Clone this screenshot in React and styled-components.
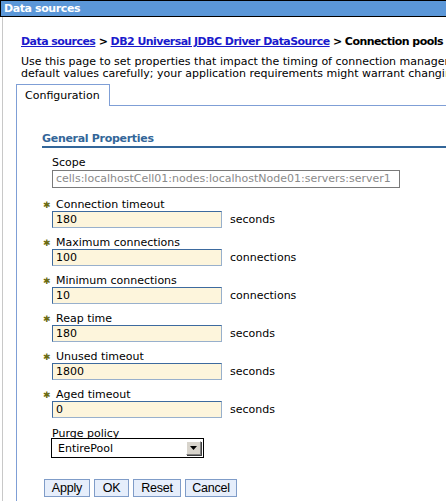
import React from 'react'
import styled, { createGlobalStyle } from 'styled-components'

const GlobalStyle = createGlobalStyle`
  html, body {
    margin: 0;
    padding: 0;
    background: #fff;
    font-family: Verdana, "DejaVu Sans", sans-serif;
    font-size: 11px;
    color: #000;
    overflow: hidden;
  }
`

const TitleBar = styled.div`
  height: 15px;
  line-height: 15px;
  background: #5b97d8;
  border: 1px solid #000;
  border-right: none;
  padding-left: 3px;
  color: #fff;
  font-weight: bold;
  letter-spacing: -0.4px;
  white-space: nowrap;
`

const Content = styled.div`
  margin-left: 2px;
  border-left: 1px solid #c8c8c8;
  padding: 18px 0 0 13px;
  height: 484px;
  box-sizing: border-box;
  white-space: nowrap;
  overflow: hidden;
`

const Crumbs = styled.div`
  padding-left: 5px;
  font-weight: bold;
  letter-spacing: -0.55px;
  line-height: 14px;
  a {
    color: #1a1acc;
    text-decoration: underline;
  }
`

const Intro = styled.p`
  margin: 7px 0 0;
  padding-left: 5px;
  line-height: 12px;
`

const TabStrip = styled.div`
  margin-top: 4px;
  display: flex;
  align-items: flex-end;
`

const Tab = styled.div`
  height: 21px;
  line-height: 21px;
  padding: 0 8px;
  width: 76px;
  border: 1px solid #7f9fd6;
  border-bottom: none;
  background: #fff;
`

const TabRest = styled.div`
  flex: 1;
  border-bottom: 1px solid #7f9fd6;
`

const Panel = styled.div`
  border-left: 1px solid #7f9fd6;
  padding: 27px 0 0 25px;
  height: 400px;
`

const SectionTitle = styled.div`
  color: #336699;
  font-weight: bold;
  letter-spacing: -0.3px;
  line-height: 12px;
  padding-bottom: 1px;
  border-bottom: 2px solid #336699;
`

const Fields = styled.div`
  padding: 9px 0 0 10px;
  display: flex;
  flex-direction: column;
`

const Field = styled.div`
  margin-top: ${p => p.$lead || 0}px;
  margin-bottom: ${p => p.$gap || 0}px;
`

const Label = styled.div`
  position: relative;
  line-height: 12px;
  padding-left: ${p => (p.$required ? 4 : 0)}px;
  margin-bottom: ${p => p.$space || 0}px;
`

const Star = styled.span`
  position: absolute;
  left: -9px;
  top: 0;
  color: #6b6b10;
  font-size: 9px;
`

const Row = styled.div`
  display: flex;
  align-items: center;
`

const Input = styled.div`
  box-sizing: border-box;
  width: ${p => p.$width}px;
  height: ${p => p.$height || 17}px;
  line-height: 15px;
  padding-left: 3px;
  background: ${p => (p.$disabled ? '#fff' : '#fdf5dc')};
  color: ${p => (p.$disabled ? '#8a8a8a' : '#000')};
  border: 1px solid ${p => (p.$disabled ? '#7a7a7a' : '#3d6a9e')};
  border-right-color: ${p => (p.$disabled ? '#7a7a7a' : '#98b0cc')};
  border-bottom-color: ${p => (p.$disabled ? '#7a7a7a' : '#98b0cc')};
  overflow: hidden;
`

const Unit = styled.span`
  margin-left: 8px;
`

const Select = styled.div`
  box-sizing: border-box;
  width: 153px;
  height: 20px;
  margin-left: -1px;
  border: 1px solid #000;
  display: flex;
  align-items: center;
  padding-left: 6px;
`

const SelectValue = styled.span`
  flex: 1;
`

const Arrow = styled.div`
  width: 15px;
  height: 14px;
  margin-right: 2px;
  box-sizing: border-box;
  background: #d8d4cc;
  border: 1px solid;
  border-color: #fff #808080 #808080 #fff;
  box-shadow: 1px 1px 0 #404040;
  display: flex;
  align-items: center;
  justify-content: center;
`

const Buttons = styled.div`
  display: flex;
  gap: 4px;
  margin-left: 2px;
  margin-top: 21px;
`

const Button = styled.button`
  box-sizing: border-box;
  width: ${p => p.$width}px;
  height: 18px;
  padding: 0;
  font-family: "Liberation Sans", Arial, sans-serif;
  font-size: 12.5px;
  letter-spacing: -0.2px;
  background: #e6eefb;
  border: 1px solid #7f9cc8;
  color: #000;
  line-height: 16px;
`

const fields = [
  { label: 'Connection timeout', value: '180', unit: 'seconds' },
  { label: 'Maximum connections', value: '100', unit: 'connections' },
  { label: 'Minimum connections', value: '10', unit: 'connections' },
  { label: 'Reap time', value: '180', unit: 'seconds' },
  { label: 'Unused timeout', value: '1800', unit: 'seconds' },
  { label: 'Aged timeout', value: '0', unit: 'seconds' },
]

const buttons = [
  { text: 'Apply', width: 46 },
  { text: 'OK', width: 35 },
  { text: 'Reset', width: 48 },
  { text: 'Cancel', width: 52 },
]

const App = () => {
  return (
    <>
      <GlobalStyle />
      <TitleBar>Data sources</TitleBar>
      <Content>
        <Crumbs>
          <a href="#">Data sources</a> &gt; <a href="#">DB2 Universal JDBC Driver DataSource</a> &gt; Connection pools
        </Crumbs>
        <Intro>
          Use this page to set properties that impact the timing of connection management tasks. Change the
          <br />
          default values carefully; your application requirements might warrant changing them.
        </Intro>
        <TabStrip>
          <Tab>Configuration</Tab>
          <TabRest />
        </TabStrip>
        <Panel>
          <SectionTitle>General Properties</SectionTitle>
          <Fields>
            <Field $gap={11}>
              <Label $space={1}>Scope</Label>
              <Input $width={348} $height={18} $disabled>
                cells:localhostCell01:nodes:localhostNode01:servers:server1
              </Input>
            </Field>
            {fields.map(f => (
              <Field key={f.label} $gap={9}>
                <Label $required>
                  <Star>✱</Star>
                  {f.label}
                </Label>
                <Row>
                  <Input $width={170}>{f.value}</Input>
                  <Unit>{f.unit}</Unit>
                </Row>
              </Field>
            ))}
            <Field $lead={1}>
              <Label $space={-2}>Purge policy</Label>
              <Select>
                <SelectValue>EntirePool</SelectValue>
                <Arrow>
                  <svg width="7" height="4" viewBox="0 0 7 4">
                    <path d="M0 0h7L3.5 4z" fill="#000" />
                  </svg>
                </Arrow>
              </Select>
            </Field>
          </Fields>
          <Buttons>
            {buttons.map(b => (
              <Button key={b.text} $width={b.width}>{b.text}</Button>
            ))}
          </Buttons>
        </Panel>
      </Content>
    </>
  )
}

export default App
